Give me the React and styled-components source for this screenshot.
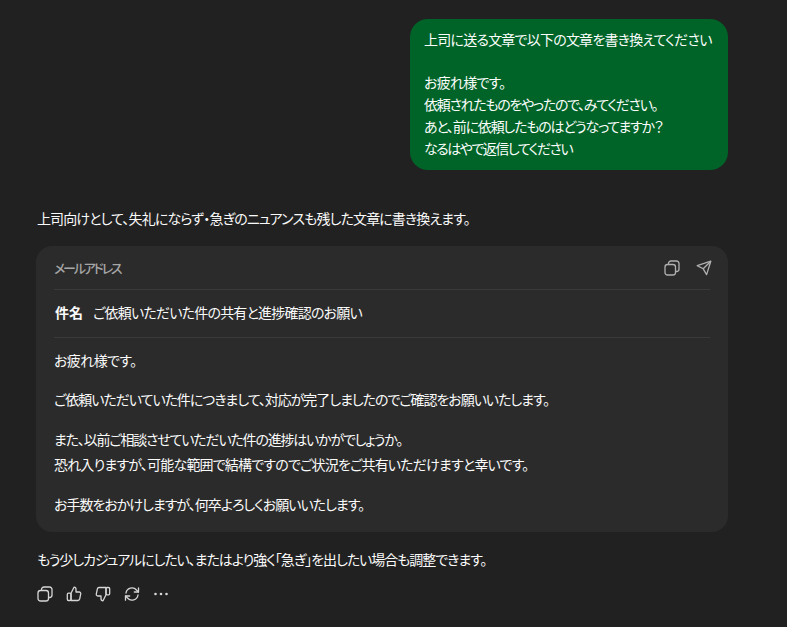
import React from "react";
import styled, { createGlobalStyle } from "styled-components";

const Global = createGlobalStyle`
  html, body { margin: 0; padding: 0; background: #212121; }
  body { font-family: "Noto Sans CJK JP", "Noto Sans", sans-serif; color: #fafafa; font-size: 14px; font-feature-settings: "palt" 1; }
`;
const Page = styled.div`
  width: 787px; height: 627px; box-sizing: border-box; overflow: hidden;
  padding: 19px 59px 0 36px; display: flex; flex-direction: column;
`;
const Bubble = styled.div`
  align-self: flex-end; width: 318px; height: 151px; box-sizing: border-box;
  background: #006428; border-radius: 18px; padding: 10px 14px;
  line-height: 21.7px; color: #fbfdfb;
`;
const BubbleLine = styled.div`
  letter-spacing: ${p => p.$track}px; white-space: nowrap; margin-top: ${p => p.$gap || 0}px;
`;
const Lead = styled.p`
  margin: 37px 0 0 1px; line-height: 22px; height: 22px; white-space: nowrap; letter-spacing: -0.88px;
`;
const Card = styled.section`
  margin-top: 17px; height: 286px; box-sizing: border-box; background: #2b2b2b;
  border-radius: 16px; padding: 0 18px;
`;
const CardHead = styled.header`
  height: 43px; display: flex; align-items: center; justify-content: space-between;
  border-bottom: 1px solid #3a3a3a; font-size: 13px; font-weight: 500; color: #a6a6a6; letter-spacing: -2.2px;
`;
const IconRow = styled.div`
  display: flex; align-items: center; gap: ${p => p.$gap}px; color: ${p => p.$color};
  & svg { display: block; }
`;
const HeadIcons = styled(IconRow)`margin-right: -2px;`;
const Subject = styled.div`
  height: 48px; box-sizing: border-box; padding-bottom: 4px; display: flex; align-items: center; gap: 10px;
  border-bottom: 1px solid #3a3a3a; letter-spacing: -0.8px;
`;
const SubjectLabel = styled.strong`font-weight: 700; margin-left: 1px; letter-spacing: 0;`;
const Para = styled.p`
  margin: ${p => p.$top}px 0 0; line-height: 25px; white-space: nowrap; letter-spacing: ${p => p.$track}px;
`;
const Foot = styled.p`
  margin: 16px 0 0 1px; line-height: 22px; height: 22px; white-space: nowrap; letter-spacing: -1.05px;
`;
const Actions = styled(IconRow)`margin: 16px 0 0 1px;`;

const Copy = () => (
  <svg width="16" height="16" viewBox="0 0 16 16" fill="none" stroke="currentColor" strokeWidth="1.3">
    <rect x="1" y="4.5" width="10.5" height="10.5" rx="2.5" />
    <path d="M4.5 4.5V3.5A2.5 2.5 0 0 1 7 1h5.5A2.5 2.5 0 0 1 15 3.5V9a2.5 2.5 0 0 1-2.5 2.5h-1" />
  </svg>
);
const Send = () => (
  <svg width="16" height="16" viewBox="0 0 16 16" fill="none" stroke="currentColor" strokeWidth="1.3" strokeLinejoin="round">
    <path d="M1.2 5.6 14.8 1.2 10.6 14.6 7.2 8.8Z" />
    <path d="M7.2 8.8 14.8 1.2" />
  </svg>
);
const Up = () => (
  <svg width="16" height="16" viewBox="0 0 16 16" fill="none" stroke="currentColor" strokeWidth="1.3" strokeLinejoin="round">
    <path d="M5 7.2 8 1.2c1.3 0 2 .9 2 2.1V6h3.2c1 0 1.7.9 1.5 1.9l-1 5c-.2.9-.9 1.6-1.8 1.6H5Z" />
    <rect x="1.3" y="7.2" width="3.7" height="7.3" rx="1.2" />
  </svg>
);
const Down = () => (
  <svg width="16" height="16" viewBox="0 0 16 16" fill="none" stroke="currentColor" strokeWidth="1.3" strokeLinejoin="round">
    <path d="M11 8.8 8 14.8c-1.3 0-2-.9-2-2.1V10H2.8c-1 0-1.7-.9-1.5-1.9l1-5c.2-.9.9-1.6 1.8-1.6H11Z" />
    <rect x="11" y="1.5" width="3.7" height="7.3" rx="1.2" />
  </svg>
);
const Redo = () => (
  <svg width="16" height="16" viewBox="0 0 16 16" fill="none" stroke="currentColor" strokeWidth="1.3" strokeLinecap="round" strokeLinejoin="round">
    <path d="M2 7a6 6 0 0 1 10.5-3L14.5 6" />
    <path d="M14.5 1.8V6h-4.2" />
    <path d="M14 9a6 6 0 0 1-10.5 3L1.5 10" />
    <path d="M1.5 14.2V10h4.2" />
  </svg>
);
const More = () => (
  <svg width="16" height="16" viewBox="0 0 16 16" fill="currentColor">
    <circle cx="2.5" cy="8" r="1.3" /><circle cx="8" cy="8" r="1.3" /><circle cx="13.5" cy="8" r="1.3" />
  </svg>
);

export default function App() {
  return (
    <Page>
      <Global />
      <Bubble>
        <BubbleLine $track={-0.78}>上司に送る文章で以下の文章を書き換えてください</BubbleLine>
        <BubbleLine $track={-0.75} $gap={21.7}>お疲れ様です。</BubbleLine>
        <BubbleLine $track={-1.3}>依頼されたものをやったので、みてください。</BubbleLine>
        <BubbleLine $track={-1.2}>あと、前に依頼したものはどうなってますか？</BubbleLine>
        <BubbleLine $track={-1.5}>なるはやで返信してください</BubbleLine>
      </Bubble>
      <Lead>上司向けとして、失礼にならず・急ぎのニュアンスも残した文章に書き換えます。</Lead>
      <Card>
        <CardHead>
          メールアドレス
          <HeadIcons $gap={16} $color="#b0b0b0"><Copy /><Send /></HeadIcons>
        </CardHead>
        <Subject>
          <SubjectLabel>件名</SubjectLabel>
          ご依頼いただいた件の共有と進捗確認のお願い
        </Subject>
        <Para $top={10} $track={-0.6}>お疲れ様です。</Para>
        <Para $top={14} $track={-1.05}>ご依頼いただいていた件につきまして、対応が完了しましたのでご確認をお願いいたします。</Para>
        <Para $top={15} $track={-1.2}>また、以前ご相談させていただいた件の進捗はいかがでしょうか。</Para>
        <Para $top={0} $track={-0.82}>恐れ入りますが、可能な範囲で結構ですのでご状況をご共有いただけますと幸いです。</Para>
        <Para $top={15} $track={-1}>お手数をおかけしますが、何卒よろしくお願いいたします。</Para>
      </Card>
      <Foot>もう少しカジュアルにしたい、またはより強く「急ぎ」を出したい場合も調整できます。</Foot>
      <Actions $gap={13} $color="#d6d6d6"><Copy /><Up /><Down /><Redo /><More /></Actions>
    </Page>
  );
}
